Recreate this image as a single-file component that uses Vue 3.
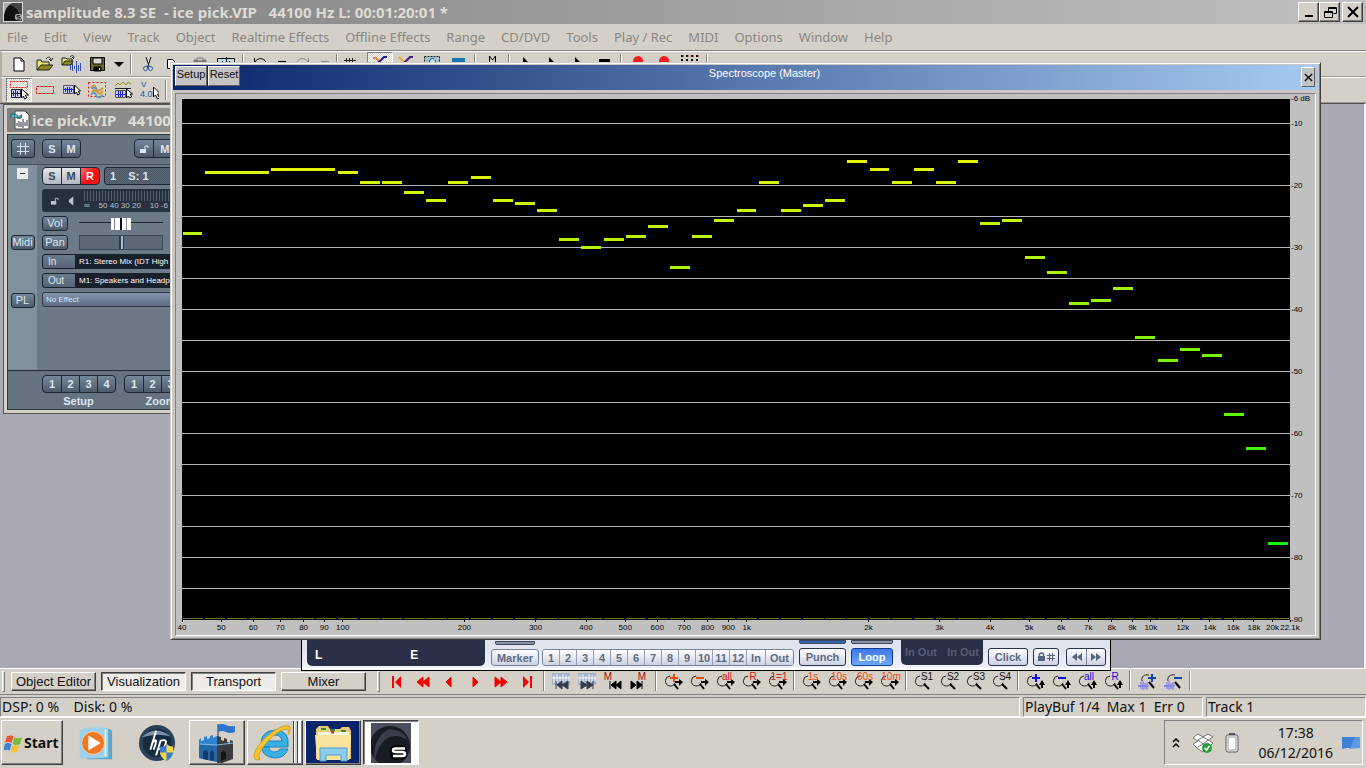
<script setup>
  import { ref } from 'vue';

  const menus = ['File', 'Edit', 'View', 'Track', 'Object', 'Realtime Effects', 'Offline Effects', 'Range', 'CD/DVD', 'Tools', 'Play / Rec', 'MIDI', 'Options', 'Window', 'Help'];

  // every icon is a list of [path, fill, stroke]
  const icons = {
    file: [['M5 4h7l3 3v10h-10z', '#fff', '#000'], ['M12 4v3h3', 'none', '#000']],
    open: [['M2 16V6h4l1 2h7v3', '#e8e47a', '#222'], ['M2 16l4-5h12l-4 5z', '#8c8a1c', '#222'], ['M11 5c2-3 5-2 5 1m-2-1l2 2l2-3', 'none', '#222']],
    importwav: [['M1 11V4h4l1 1h5v2', '#e8e47a', '#222'], ['M1 11l3-4h8l-2 4z', '#8c8a1c', '#222'], ['M9 3c2-2 4-2 4 1m-2-1l2 2', 'none', '#222'], ['M9.500 11v5M11.500 9v8M13.500 12v3M15.500 7v12M17.500 11v6M19.500 9v8', 'none', '#2c50b0']],
    save: [['M3.500 3.500h14v13h-14z', '#6b6b1e', '#000'], ['M6 4h9v6h-9z', '#d8d8d0', '#000'], ['M7 13h7v4h-7z', '#000', '#000'], ['M12 14h1v2h-1z', '#fff', 'none']],
    down: [['M5 8h10l-5 5z', '#000', 'none']],
    cut: [['M8 3l3 9M13 3l-3 9', 'none', '#111'], ['M6 13a2 2 0 1 0 3 3l1-4zM14 13a2 2 0 1 1-3 3l-1-4z', 'none', '#26549c']],
    copy: [['M3.500 5.500h5l3 3v6h-8z', '#fff', '#000'], ['M9.500 8.500h5l3 3v6h-8z', '#fff', '#22226c']],
    paste: [['M4 6h12v11h-12z', '#777', '#777'], ['M7 4h6v3h-6z', '#d4d0c8', '#777']],
    objedit: [['M1.500 4.500h17v11h-17z', '#b8dce8', '#000'], ['M10.500 3v14M4.500 8v4M6.500 7v6M8.500 8v4M13.500 7v6M15.500 8v4', 'none', '#111']],
    undo: [['M4.500 4v5h5M5 8c3-5 9-4 11 0', 'none', '#000']],
    redo: [['M15.500 4v5h-5M15 8c-3-5-9-4-11 0', 'none', '#888']],
    dash: [['M6 7h8v2h-8z', '#000', 'none']],
    dashoff: [['M6 7h8v2h-8z', '#888', 'none']],
    grid: [['M2.500 4v10M5.500 4v10M8.500 4v10M0 6.500h12M0 10.500h12', 'none', '#222']],
    fade: [['M3 4h3l4 4l4 5', 'none', '#e4842c', 2], ['M17 3h-3l-4 4l-5 5', 'none', '#1c1c8c', 2]],
    fade2: [['M3 3l4 4l3 1', 'none', '#e4b02c', 2], ['M17 3h-3l-4 4l-5 5', 'none', '#4c1c8c', 2]],
    range: [['M2.500 2.500h15v10h-15z', '#a0c4cc', '#222', 1, '2 1'], ['M12 5a3 3 0 1 0 1 1', '#cfe3ea', '#123c80']],
    bluebar: [['M4 4h13v4h-13z', '#1478ac', 'none']],
    mark: [['M7.500 8V2l3 4l3-4v6', 'none', '#000']],
    play: [['M7 3l8 8h-8z', '#000', 'none']],
    stop: [['M5 5h11v8h-11z', '#000', 'none']],
    rec: [['M10 2a5 5 0 1 0 .1 0z', '#fa1c1c', 'none']],
    midi: [['M1 2h18M1 6h18M1 9h18', 'none', '#111', 2, '2 3'], ['M3 2h16', 'none', '#d01040', 1, '1 4']],
    rangeobj: [['M1.500 1.500h17v6h-17z', 'none', '#e01818', 1, '2 1'], ['M2.500 9.500h9v8h-9zM2 13.500h9', '#c8d0f8', '#222'], ['M4.500 11v5M6.500 10v7M8.500 11v5', 'none', '#2424c8'], ['M12.500 9v9l2-2l1 3l2-1l-1-3h3z', '#fff', '#000']],
    redbox: [['M1.500 6.500h17v7h-17z', 'none', '#e01818', 1, '3 1']],
    objmouse: [['M2.500 5.500h10v8h-10z', '#c8d0f8', '#556'], ['M4.500 8v4M6.500 7v6M8.500 7v6M10.500 8v4M3 9.500h9', 'none', '#2424c8'], ['M13.500 5v9l2-2l1 3l2-1l-1-3h2z', '#fff', '#000']],
    curves: [['M1.500 2.500h17v14h-17z', '#d8d8c8', '#e01818', 1, '2 2'], ['M4 8q3-5 5 0t7 0M5 12q2-4 5 0t6-1', 'none', '#d8943c', 2], ['M4 15q3-5 5 0t7 0M5 9q2-3 5 0', 'none', '#5c9cc4', 2]],
    curveobj: [['M2 6l3-3l2 2l3-3l3 3l2-3l3 2', 'none', '#94901c'], ['M2 8.500h16', 'none', '#222'], ['M2.500 10.500h10v7h-10z', '#c8d0f8', '#556'], ['M5.500 11v6M7.500 11v6M9.500 11v6M3 14.500h9', 'none', '#2424c8'], ['M13.500 9v9l2-2l1 2l2-1l-1-3h2z', '#fff', '#000']],
    v40: [['M14.500 7v10l2-2l2 4l2-1l-2-4h3z', '#fff', '#000']],
    first: [['M5 4h2v12h-2zM14 4v12l-6-6z', '#f80000', 'none']],
    rew: [['M10 5v10l-6-5zM16 5v10l-6-5z', '#f80000', '#f80000']],
    left: [['M12 5v10l-5-5z', '#f80000', '#f80000']],
    right: [['M8 5v10l5-5z', '#f80000', '#f80000']],
    fwd: [['M4 5v10l6-5zM10 5v10l6-5z', '#f80000', '#f80000']],
    last: [['M13 4h2v12h-2zM6 4v12l6-6z', '#f80000', 'none']],
    wavprev: [['M1 1h18v12h-18z', '#a3b3cb', 'none'], ['M3 3v8M6 2v9M9 4v5M12 2v9M15 3v7M18 4v5M1 6h18', 'none', '#f2f6fa'], ['M5 9v8M11 9v8l-5-4zM17 9v8l-6-4z', '#333c4c', '#333c4c']],
    wavnext: [['M1 1h18v12h-18z', '#a3b3cb', 'none'], ['M3 3v8M6 2v9M9 4v5M12 2v9M15 3v7M18 4v5M1 6h18', 'none', '#f2f6fa'], ['M16 9v8M4 9v8l6-4zM10 9v8l6-4z', '#333c4c', '#333c4c']],
    mprev: [['M7 9v8M13 9v8l-5-4zM18 9v8l-5-4z', '#000', '#000']],
    mnext: [['M13 9v8M2 9v8l5-4zM8 9v8l5-4z', '#000', '#000']],
    zoomh: [['M7 4a5 5 0 1 0 5 7', 'none', '#222'], ['M7 4a5 5 0 0 1 5 7', 'none', '#bbb'], ['M11 12l4 5', 'none', '#000', 2], ['M12 9h4v-2l4 3l-4 4v-3h-4z', '#000', 'none']],
    zooms: [['M7 4a5 5 0 1 0 5 7', 'none', '#222'], ['M7 4a5 5 0 0 1 5 7', 'none', '#bbb'], ['M11 12l5 5', 'none', '#000', 2]],
    zoomv: [['M7 4a5 5 0 1 0 5 7', 'none', '#222'], ['M7 4a5 5 0 0 1 5 7', 'none', '#bbb'], ['M11 12l4 5', 'none', '#000', 2], ['M17 8l3 5h-2v3h-2v-3h-2z', '#000', 'none']],
    zoomw: [['M12 3c-5-1-8 2-7 6', 'none', '#222'], ['M12 10l5 6', 'none', '#000', 2], ['M2 13v2M4 10v7M6 9v9M8 11v6M10 10v8M1 14h11', 'none', '#6c6cf0']]
  };

  const mainBar = ['file', 'open', 'importwav', 'save', 'down', '|', 'cut', 'copy', 'paste', 'objedit', '|', 'undo', 'dash', 'redo', 'dashoff', '|', 'grid', 'fade', 'fade2', 'range', 'bluebar', '|', 'mark', '|', 'play', 'play', 'play', 'stop', '|', 'rec', 'rec', 'midi', '|'];
  const narrow = ['down', 'dash', 'dashoff'];
  const modeBar = ['rangeobj', 'redbox', 'objmouse', 'curves', 'curveobj', 'v40', '|'];

  const orange = '#e84c10', crimson = '#d81414', black = '#111', blue = '#1010d8';
  const navBar = [
    { icon: 'first' }, { icon: 'rew' }, { icon: 'left' }, { icon: 'right' }, { icon: 'fwd' }, { icon: 'last' }, { icon: '|' },
    { icon: 'wavprev' }, { icon: 'wavnext' }, { icon: 'mprev', text: 'M', color: '#a00808', x: 5 }, { icon: 'mnext', text: 'M', color: '#a00808', x: 13 }, { icon: '|' },
    { icon: 'zoomh', plus: true, color: orange }, { icon: 'zoomh', minus: true, color: orange },
    { icon: 'zoomh', text: 'all', color: crimson }, { icon: 'zoomh', text: 'R', color: crimson }, { icon: 'zoomh', text: '1=1', color: crimson }, { icon: '|' },
    { icon: 'zoomh', text: '1s', color: orange }, { icon: 'zoomh', text: '10s', color: orange }, { icon: 'zoomh', text: '60s', color: orange }, { icon: 'zoomh', text: '10m', color: orange }, { icon: '|' },
    { icon: 'zooms', text: 'S1', color: black, x: 14 }, { icon: 'zooms', text: 'S2', color: black, x: 14 }, { icon: 'zooms', text: 'S3', color: black, x: 14 }, { icon: 'zooms', text: 'S4', color: black, x: 14 }, { icon: '|' },
    { icon: 'zoomv', plus: true, color: blue }, { icon: 'zoomv', minus: true, color: blue }, { icon: 'zoomv', text: 'all', color: blue }, { icon: 'zoomv', text: 'R', color: blue }, { icon: '|' },
    { icon: 'zoomw', plus: true, color: '#1444a8', x: 15 }, { icon: 'zoomw', minus: true, color: '#1444a8', x: 15 }, { icon: '|' }
  ];

  const panels = ref([
    { name: 'Object Editor', on: false },
    { name: 'Visualization', on: true },
    { name: 'Transport', on: true },
    { name: 'Mixer', on: false }
  ]);

  // third octave levels in dB, 50 bands
  const levels = [-27.7, -18, -18, -18, -17.4, -17.4, -17.4, -18, -19.6, -19.6, -21.1, -22.4, -19.5, -18.7, -22.5, -23, -24.1, -28.8, -30.1, -28.7, -28.2, -26.7, -33.2, -28.2, -25.6, -24.1, -19.5, -24, -23.3, -22.4, -16.1, -17.4, -19.5, -17.5, -19.5, -16.1, -26.2, -25.6, -31.7, -34.1, -39.1, -38.5, -36.6, -44.5, -48.2, -46.4, -47.4, -56.9, -62.4, -77.7];
  const dbLines = [-10, -15, -20, -25, -30, -35, -40, -45, -50, -55, -60, -65, -70, -75, -80, -85];
  const dbLabels = [-10, -20, -30, -40, -50, -60, -70, -80, -90];
  const freqs = [40, 50, 60, 70, 80, 90, 100, 200, 300, 400, 500, 600, 700, 800, 900, 1000, 2000, 3000, 4000, 5000, 6000, 7000, 8000, 9000, 10000, 12000, 14000, 16000, 18000, 20000, 22100];

  const dbY = (db) => (-6 - db) / 84 * 100 + '%';
  const freqX = (f) => Math.log10(f / 40) / Math.log10(22100 / 40) * 100 + '%';
  const freqName = (f) => f >= 1000 ? f / 1000 + 'k' : f;
  const bandX = (i) => i * 2 + 0.05 + '%';
  // bands with the same level run together
  const bandW = (i) => levels[i] === levels[i + 1] && levels[i] > -19 ? '2%' : '1.8%';
  const bandColor = (db) => `hsl(${64 + (-db - 16) * 0.85}, 95%, 49%)`;
</script>

<template>
  <div class="screen">
    <header class="titlebar">
      <svg class="app-icon" viewBox="0 0 20 20"><rect width="20" height="20" fill="#ddd" /><rect x="1" y="1" width="18" height="18" fill="#444" /><path d="M1 19V5q8-5 14 4q3 5 0 10z" fill="#111" /><path d="M1 1h8q-6 3-8 12z" fill="#aaa" /><rect x="12" y="12" width="7" height="6" rx="2" fill="#aaa" /><path d="M17 13.500h-3v1.500h3v2h-3" fill="none" stroke="#222" /></svg>
      <h1>samplitude 8.3 SE&nbsp; - ice pick.VIP&nbsp;&nbsp; 44100 Hz L: 00:01:20:01 *</h1>
      <div class="winbtns">
        <button aria-label="Minimize"><svg viewBox="0 0 16 16"><path d="M4 12h8" stroke="#000" stroke-width="2" /></svg></button>
        <button aria-label="Restore"><svg viewBox="0 0 16 16"><path d="M6.500 7V3.500h8v6h-3M6 4.500h8M2.500 7.500h8v6h-8zM3 8.500h8" fill="none" stroke="#000" /></svg></button>
        <button aria-label="Close" class="apart"><svg viewBox="0 0 16 16"><path d="M3 3l10 10M13 3l-10 10" stroke="#000" stroke-width="2" /></svg></button>
      </div>
    </header>

    <nav class="menubar">
      <button v-for="m in menus" :key="m">{{ m }}</button>
    </nav>

    <div class="toolbar">
      <template v-for="(t, i) in mainBar" :key="i">
        <span v-if="t === '|'" class="sep"></span>
        <button v-else class="tool" :class="{ narrow: narrow.includes(t), pressed: t === 'fade' }" :aria-label="t">
          <svg viewBox="0 0 20 20"><path v-for="(p, j) in icons[t]" :key="j" :d="p[0]" :fill="p[1]" :stroke="p[2]" :stroke-width="p[3]" :stroke-dasharray="p[4]" /></svg>
        </button>
      </template>
    </div>
    <div class="toolbar">
      <template v-for="(t, i) in modeBar" :key="i">
        <span v-if="t === '|'" class="sep"></span>
        <button v-else class="tool" :class="{ pressed: t === 'rangeobj' }" :aria-label="t">
          <svg viewBox="0 0 20 20">
            <template v-if="t === 'v40'"><text x="2" y="7" font-size="8" fill="#2050c0">V</text><text x="1" y="17" font-size="9" fill="#2060b0">4.0</text></template>
            <path v-for="(p, j) in icons[t]" :key="j" :d="p[0]" :fill="p[1]" :stroke="p[2]" :stroke-width="p[3]" :stroke-dasharray="p[4]" />
          </svg>
        </button>
      </template>
    </div>

    <main class="workspace">
      <section class="project">
        <div class="project-title">
          <svg viewBox="0 0 20 20"><path d="M5 1h10l4 4v14h-14z" fill="#fff" stroke="#444" /><path d="M0 4q3-3 6 0t6 0v4q-3 2-6 0t-6 0z" fill="#2c7c88" /><path d="M2 6h9" stroke="#bfe4e8" stroke-dasharray="2 1" /><path d="M7 13v3M9 11v6M11 12v5M13 9v9M15 12v4M17 10v6" stroke="#26323c" /></svg>
          <h2>ice pick.VIP&nbsp;&nbsp; 44100 Hz</h2>
        </div>
        <div class="project-body">
          <div class="track-head">
            <button class="dark hash" aria-label="Grid"><svg viewBox="0 0 14 12"><path d="M4.500 0v12M9.500 0v12M1 3.500h12M1 8.500h12" stroke="#dce6f2" /></svg></button>
            <div class="group"><button class="dark">S</button><button class="dark">M</button></div>
            <div class="group master"><button class="dark" aria-label="Lock"><svg viewBox="0 0 10 10"><path d="M1 5h6v4h-6z" fill="#dce6f2" /><path d="M6 5V2h3v2" fill="none" stroke="#dce6f2" /></svg></button><button class="dark">Master</button></div>
          </div>
          <div class="track">
            <div class="track-side">
              <button class="fold" aria-label="Fold"></button>
              <button class="dark midi">Midi</button>
              <button class="dark pl">PL</button>
            </div>
            <div class="track-main">
              <div class="row">
                <div class="group smr"><button class="light">S</button><button class="light">M</button><button class="red">R</button></div>
                <div class="name">1 &nbsp;&nbsp; S: 1</div>
              </div>
              <div class="meter">
                <svg viewBox="0 0 10 10"><path d="M1 5h6v4h-6z" fill="#b9c3d0" /><path d="M6 5V2h3v2" fill="none" stroke="#b9c3d0" /></svg>
                <svg viewBox="0 0 10 10"><path d="M7 0v10l-5-4v-2z" fill="#b9c3d0" /></svg>
                <div class="scale"><i></i><span>∞ &nbsp;&nbsp; 50 40 30 20 &nbsp;&nbsp; 10 -6</span></div>
              </div>
              <div class="row">
                <label class="dark tag" for="vol">Vol</label>
                <input id="vol" type="range" class="vol" value="50">
              </div>
              <div class="row">
                <label class="dark tag" for="pan">Pan</label>
                <input id="pan" type="range" class="pan" value="50">
              </div>
              <div class="slot"><span>In</span><b>R1: Stereo Mix (IDT High D</b></div>
              <div class="slot"><span>Out</span><b>M1: Speakers and Headpho</b></div>
              <button class="effect">No Effect</button>
            </div>
          </div>
          <div class="track-foot">
            <div class="presets"><div class="group"><button v-for="n in 4" :key="n" class="dark">{{ n }}</button></div><span>Setup</span></div>
            <div class="presets"><div class="group"><button v-for="n in 4" :key="n" class="dark">{{ n }}</button></div><span>Zoom</span></div>
          </div>
        </div>
      </section>
    </main>

    <section class="transport">
      <div class="time"><span>L</span><span>E</span></div>
      <div class="markers">
        <i class="bar"></i>
        <div class="marker-row">
          <button class="pale">Marker</button>
          <div class="nums"><button v-for="n in 12" :key="n">{{ n }}</button><button class="io">In</button><button class="io">Out</button></div>
        </div>
      </div>
      <div class="stack"><i class="bar blue"></i><button class="pale strong">Punch</button></div>
      <div class="stack loop"><i class="bar thin"></i><button class="pale on">Loop</button></div>
      <div class="inout"><span>In Out</span><span>In Out</span></div>
      <div class="stack click"><button class="pale strong">Click</button></div>
      <button class="pale strong lock" aria-label="Lock to grid"><svg viewBox="0 0 18 10"><path d="M1 4h7v5h-7z" fill="#55647c" /><path d="M2.500 4V2q2-2 4 0v2" fill="none" stroke="#55647c" stroke-width="1.500" /><path d="M12.500 1v8M15.500 1v8M10 3.500h8M10 6.500h8" stroke="#55647c" /></svg></button>
      <div class="skip"><button aria-label="Back"><svg viewBox="0 0 10 8"><path d="M5 0v8l-5-4zM10 0v8l-5-4z" fill="#55647c" /></svg></button><button aria-label="Forward"><svg viewBox="0 0 10 8"><path d="M0 0v8l5-4zM5 0v8l5-4z" fill="#55647c" /></svg></button></div>
    </section>

    <section class="scope">
      <div class="scope-title">
        <button>Setup</button>
        <button>Reset</button>
        <h2>Spectroscope (Master)</h2>
        <button class="close" aria-label="Close"><svg viewBox="0 0 10 10"><path d="M1 1l8 8M9 1l-8 8" stroke="#000" stroke-width="1.500" /></svg></button>
      </div>
      <div class="chart">
        <svg class="plot">
          <line v-for="d in dbLines" :key="d" x1="0" x2="100%" :y1="dbY(d)" :y2="dbY(d)" stroke="#b4b4b4" shape-rendering="crispEdges" />
          <rect v-for="(l, i) in levels" :key="i" :x="bandX(i)" :y="dbY(l)" :width="bandW(i)" height="3" :fill="bandColor(l)" transform="translate(0 -2)" shape-rendering="crispEdges" />
          <line v-for="(l, i) in levels" :key="'z' + i" :x1="bandX(i)" :x2="i * 2 + 1.9 + '%'" y1="99.8%" y2="99.8%" stroke="#70702c" shape-rendering="crispEdges" />
        </svg>
        <svg class="db">
          <text x="1" y="2">-6 dB</text>
          <text v-for="d in dbLabels" :key="d" x="1" :y="dbY(d)" dy="2">{{ d }}</text>
        </svg>
        <svg class="freq">
          <template v-for="f in freqs" :key="f">
            <line :x1="freqX(f)" :x2="freqX(f)" y1="0" y2="2" stroke="#000" shape-rendering="crispEdges" />
            <text :x="freqX(f)" y="10" text-anchor="middle">{{ freqName(f) }}</text>
          </template>
        </svg>
      </div>
    </section>

    <div class="navbar">
      <i class="grip"></i>
      <div class="panels">
        <button v-for="p in panels" :key="p.name" :class="{ on: p.on }" @click="p.on = !p.on">{{ p.name }}</button>
      </div>
      <i class="grip"></i>
      <template v-for="(t, i) in navBar" :key="i">
        <span v-if="t.icon === '|'" class="sep"></span>
        <button v-else class="tool" :aria-label="t.icon">
          <svg viewBox="0 0 20 20">
            <path v-for="(p, j) in icons[t.icon]" :key="j" :d="p[0]" :fill="p[1]" :stroke="p[2]" :stroke-width="p[3]" />
            <rect v-if="t.plus || t.minus" :x="(t.x || 11) - 4" y="5" width="8" height="2" :fill="t.color" />
            <rect v-if="t.plus" :x="(t.x || 11) - 1" y="2" width="2" height="8" :fill="t.color" />
            <text v-if="t.text" :x="t.x || 12" y="8" text-anchor="middle" font-size="10" :fill="t.color">{{ t.text }}</text>
          </svg>
        </button>
      </template>
    </div>

    <div class="status">
      <span class="load">DSP: 0 %&nbsp;&nbsp;&nbsp; Disk: 0 %</span>
      <span class="buf">PlayBuf 1/4&nbsp; Max 1&nbsp; Err 0</span>
      <span class="trk">Track 1</span>
    </div>

    <footer class="taskbar">
      <button class="start">
        <svg viewBox="0 0 20 20"><path d="M3 3q4-2 7 0l-2 7q-3-2-7 0z" fill="#e4582c" /><path d="M11 4q3 2 8 0l-2 7q-4 2-8 0z" fill="#7cb83c" /><path d="M1 11q3-2 7 0l-2 7q-3-2-7 0z" fill="#3c84d4" /><path d="M9 12q3 2 7 0l-2 7q-4 2-7 0z" fill="#f4c430" /></svg>
        Start
      </button>
      <button class="task plain" aria-label="Media Player">
        <svg viewBox="0 0 40 40"><path d="M9 5h26l3 2v30h-26l-3-3z" fill="#5ca4cc" /><path d="M4 6q14-4 30-1v30q-16 2-30 1z" fill="#9cd0ec" /><path d="M31 6v28" stroke="#d8f0fa" stroke-width="2" /><circle cx="18" cy="20" r="12" fill="#f07820" stroke="#fbd4a8" /><path d="M13 12l13 8l-13 8z" fill="#fff" /></svg>
      </button>
      <button class="task plain" aria-label="HP">
        <svg viewBox="0 0 40 40"><circle cx="20" cy="20" r="19" fill="#2c4258" /><circle cx="20" cy="20" r="15" fill="#182c40" /><path d="M4 14q14-14 30-1q-14-4-30 1z" fill="#7c94a8" /><path d="M19 7l-6 20M14.500 21q6-8 4 0l-2 6M24 17l-5 16M23 18q8-3 6 3q-2 7-8 5" fill="none" stroke="#fff" stroke-width="2" /><path d="M23 24q5 0 7-3q3 3 7 3v6q-1 6-7 9q-6-3-7-9z" fill="#3c7ccc" /><path d="M30 21q3 3 7 3v6h-7zM23 30h7v9q-6-3-7-9z" fill="#f4d44c" /></svg>
      </button>
      <button class="task" aria-label="Castle">
        <svg viewBox="0 0 40 40"><path d="M21 1v16" stroke="#666" stroke-width="1.500" /><path d="M21 2q4-2 8 0t9 1v6q-5 2-9 0t-8 0z" fill="#2c74d0" /><path d="M2 17l2-2v3l3-1v-3l3-1v3l3-1v-2l3-1v3l4-2v26l-18-4z" fill="#2c84d0" /><path d="M20 13l4 1v3l3 1v-3l3 1v3l3 1v-3l3 1v18l-16 6z" fill="#3c3c40" /><path d="M2 22l18 1v16l-18-4z" fill="#2468a8" /><path d="M6 36v-7q2-4 5 0v8zM13 37v-8q2-3 4 0v9z" fill="#123c70" /><path d="M24 38v-8q3-4 5 0v6z" fill="#141416" /><path d="M3 21l17 1l16-2" fill="none" stroke="#83b4e0" /></svg>
      </button>
      <button class="task grouped" aria-label="Internet Explorer">
        <svg viewBox="0 0 40 40"><path d="M11 24h25q2-17-13-17q-14 1-14 14t14 14q10 0 13-9h-8q-2 3-5 3q-6 0-6-5zM16 18q1-6 7-6t7 6z" fill="#38b0e4" fill-rule="evenodd" stroke="#1c84c0" /><path d="M3 36q-4-6 9-20q16-15 25-13q3 2-1 9q2-6-1-6q-8 0-20 13q-11 13-7 17q-3 2-5 0z" fill="#f4c434" stroke="#d8a018" /></svg>
      </button>
      <button class="task folder" aria-label="Explorer">
        <svg viewBox="0 0 40 40"><path d="M3 6l3-3h9l2 3h10l2-2h7l2 4v28h-35z" fill="#e8cc74" /><path d="M5 9h31v5h-31z" fill="#fff8dc" /><path d="M8 6h5M17 7h5M28 8h5" stroke="#2c8c5c" stroke-width="2" /><path d="M18 9h3" stroke="#d83030" stroke-width="3" /><path d="M2 12h36l-2 25h-32z" fill="#f8e49c" /><path d="M7 25h27v13h-6v-6h-15v6h-6z" fill="#8cccec" stroke="#4c9ccc" /></svg>
      </button>
      <button class="task active" aria-label="Samplitude">
        <svg viewBox="0 0 40 40"><rect width="40" height="40" fill="#4c505c" /><circle cx="19" cy="23" r="20" fill="#181b22" /><path d="M4 40q-4-24 14-34q13 0 19 11q-15-9-25 2q-8 9-8 21z" fill="#3a3e4a" /><rect x="19" y="22" width="17" height="15" rx="5" fill="#08080a" /><path d="M34 25.500h-9q-3 0-3 2q0 1.500 3 1.500h6q3 0 3 2t-3 2h-9" fill="none" stroke="#fff" stroke-width="2.500" /></svg>
      </button>
      <div class="tray">
        <button class="chev" aria-label="Show hidden icons"><svg viewBox="0 0 8 10"><path d="M1 4l3-3l3 3M1 9l3-3l3 3" fill="none" stroke="#000" stroke-width="1.500" /></svg></button>
        <svg class="box" viewBox="0 0 20 20"><path d="M5 1l5 3l5-3l5 3l-5 3l5 3l-4 4l-6 5l-6-4l-4-4l5-3l-5-3z" fill="#fff" stroke="#777" /><path d="M5 7l5-3l5 3l-5 4zM5 14l5-3l5 3" fill="none" stroke="#777" /><circle cx="14" cy="15" r="5" fill="#2c9c3c" /><path d="M11.500 15l2 2l3-4" fill="none" stroke="#fff" stroke-width="1.500" /></svg>
        <svg class="batt" viewBox="0 0 14 20"><rect x="1" y="2" width="12" height="17" rx="2" fill="#fff" stroke="#555" /><rect x="3" y="4" width="8" height="13" fill="#fff" stroke="#999" /><path d="M4 1h6" stroke="#555" stroke-width="2" /></svg>
        <div class="clock"><time>17:38</time><time>06/12/2016</time></div>
        <svg class="desk" viewBox="0 0 18 16"><path d="M0 2h18v11l-18 1z" fill="#3c80d8" /><path d="M8 13l5-11h5v11z" fill="#5c98e4" /><path d="M0 14l7-1v1z" fill="#eee" /></svg>
      </div>
    </footer>
  </div>
</template>

<style>
body {
  background: #d4d0c8;
}
</style>

<style scoped>
.screen {
  position: relative;
  display: flex;
  flex-direction: column;
  min-height: 100vh;
  overflow: hidden;
  background: #d4d0c8;
  color: #111;
  font-family: "Noto Sans", "DejaVu Sans", sans-serif;
  font-size: 13px;
}
.screen * {
  box-sizing: border-box;
}
button {
  padding: 0;
  margin: 0;
  border: 0;
  background: none;
  color: inherit;
  font: inherit;
}
h1, h2 {
  margin: 0;
  white-space: nowrap;
}
svg {
  display: block;
  flex: none;
}

.titlebar {
  display: flex;
  align-items: center;
  height: 24px;
  padding: 0 3px;
  background: linear-gradient(90deg, #808080, #c0c0c0);
}
.app-icon {
  width: 20px;
  height: 20px;
}
.titlebar h1 {
  flex: 1;
  padding-left: 3px;
  color: #dedbd4;
  font-size: 15px;
  line-height: 22px;
}
.winbtns {
  display: flex;
}
.winbtns button {
  width: 21px;
  height: 20px;
  background: #d4d0c8;
  border: 1px solid;
  border-color: #fff #404040 #404040 #fff;
  box-shadow: inset -1px -1px #808080;
}
.winbtns svg {
  width: 16px;
  height: 16px;
  margin: 0 auto;
}
.winbtns .apart {
  margin-left: 2px;
}

.menubar {
  display: flex;
  gap: 16px;
  height: 27px;
  padding: 0 7px;
  border-bottom: 1px solid #808080;
}
.menubar button {
  color: #8a8781;
}

.toolbar {
  display: flex;
  height: 26px;
  padding-left: 4px;
  border-top: 1px solid #fff;
  border-bottom: 1px solid #9c9890;
  border-left: 2px solid #b4b0a8;
}
.tool {
  display: flex;
  align-items: center;
  justify-content: center;
  width: 26px;
  flex: none;
}
.tool svg {
  width: 20px;
  height: 20px;
}
.tool text {
  font-family: "Liberation Sans", sans-serif;
}
.tool.narrow {
  width: 17px;
}
.tool.pressed {
  background: repeating-conic-gradient(#fff 0 25%, #d4d0c8 0 50%) 0 0 / 2px 2px;
  border: 1px solid;
  border-color: #808080 #fff #fff #808080;
}
.sep {
  flex: none;
  width: 8px;
  background: linear-gradient(#808080, #808080) 3px 2px / 1px 20px no-repeat, linear-gradient(#fff, #fff) 4px 2px / 1px 20px no-repeat;
}

.workspace {
  position: relative;
  flex: 1;
  background: #a8a9b5;
  border-top: 1px solid #505050;
  border-right: 2px solid #eee;
}

/* project window */
.project {
  position: absolute;
  left: 3px;
  top: 0;
  width: 400px;
  padding: 3px;
  background: #d4d0c8;
  border: 1px solid #555;
}
.project-title {
  display: flex;
  align-items: center;
  height: 24px;
  padding-left: 3px;
  background: linear-gradient(90deg, #808080, #a8a8a8);
}
.project-title svg {
  width: 20px;
  height: 20px;
}
.project-title h2 {
  padding-left: 2px;
  color: #dedbd4;
  font-size: 15px;
  line-height: 22px;
}
.project-body {
  margin-top: 2px;
  border: 1px solid #30383f;
  background: #65727f;
  color: #dce6f2;
  font-family: "Liberation Sans", sans-serif;
  font-size: 11px;
}
.track-head {
  display: flex;
  height: 29px;
  padding: 4px 3px;
}
.dark {
  background: linear-gradient(#76879b, #4d5b6c);
  border: 1px solid #1d2833;
  border-radius: 3px;
  color: #dce6f2;
}
.group {
  display: flex;
}
.group button {
  width: 19px;
  height: 18px;
  margin-right: -1px;
  border-radius: 0;
  font-size: 11px;
  font-weight: bold;
}
.group button:first-child {
  width: 20px;
  border-radius: 4px 0 0 4px;
}
.group button:last-child {
  border-radius: 0 4px 4px 0;
}
.hash {
  width: 24px;
  height: 19px;
  margin-right: 7px;
}
.hash svg {
  width: 14px;
  height: 12px;
  margin: 0 auto;
}
.track-head .group button {
  height: 19px;
  width: 20px;
}
.master {
  margin-left: 54px;
}
.track-head .master button:last-child {
  width: 50px;
}
.master svg {
  width: 10px;
  height: 10px;
  margin: 0 auto;
}
.track {
  display: flex;
  height: 207px;
  border-bottom: 1px solid #1d2833;
  border-top: 1px solid #45505a;
}
.track-side {
  display: flex;
  flex-direction: column;
  align-items: center;
  width: 29px;
  padding-top: 3px;
  background: #81909d;
}
.track-side .dark {
  width: 24px;
  height: 15px;
  line-height: 13px;
}
.fold {
  width: 11px;
  height: 11px;
  background: linear-gradient(#334, #334) center / 5px 1px no-repeat #e8edf2;
}
.midi {
  margin: 56px 0 43px;
}
.track-main {
  display: grid;
  flex: 1;
  grid-template-rows: 18px 23px 15px 15px 15px 15px 15px;
  align-content: start;
  gap: 4px;
  padding: 2px 0 0 5px;
  background: #6c7986;
}
.row {
  display: flex;
}
.light {
  background: linear-gradient(#e2e5ea, #b3b8c2);
  border: 1px solid #1d2833;
  color: #3c4656;
}
.red {
  background: linear-gradient(135deg, #ff6e64, #f01414 50%);
  border: 1px solid #1d2833;
  color: #fff;
}
.smr {
  margin-right: 5px;
}
.smr button {
  width: 20px;
}
.name {
  flex: 1;
  padding: 2px 5px;
  background: repeating-conic-gradient(#4c5866 0 25%, #5c6876 0 50%) 0 0 / 2px 2px;
  border: 1px solid #1d2833;
  border-radius: 3px;
  font-weight: bold;
}
.meter {
  display: flex;
  align-items: center;
  gap: 8px;
  padding-left: 8px;
  background: #27313d;
  border-radius: 3px;
}
.meter svg {
  width: 9px;
  height: 10px;
}
.scale {
  display: flex;
  flex: 1;
  flex-direction: column;
  color: #b9c3d0;
  font-size: 8px;
  line-height: 9px;
}
.scale i {
  height: 10px;
  background: repeating-linear-gradient(90deg, #55606e 0 1px, #27313d 1px 3px);
}
.tag {
  width: 26px;
  margin-right: 11px;
  line-height: 13px;
  text-align: center;
}
.vol, .pan {
  appearance: none;
  width: 84px;
  height: 15px;
  margin: 0;
  background: linear-gradient(#1d2833, #1d2833) 0 6px / 100% 1px no-repeat;
}
.vol::-webkit-slider-thumb {
  appearance: none;
  width: 20px;
  height: 12px;
  background: linear-gradient(90deg, #fff 0 3px, #889 3px 4px, #fff 4px 9px, #111 9px 11px, #fff 11px 15px, #889 15px 16px, #fff 16px);
}
.pan {
  background: #5c6a78;
  border: 1px solid #3c4855;
}
.pan::-webkit-slider-thumb {
  appearance: none;
  width: 5px;
  height: 13px;
  background: linear-gradient(90deg, #2c3844 0 2px, #a8bcdc 2px 4px, #2c3844 4px);
}
.slot {
  display: flex;
  background: #18202c;
  border: 1px solid #18202c;
  border-radius: 3px;
  overflow: hidden;
  line-height: 13px;
  white-space: nowrap;
}
.slot span {
  flex: none;
  width: 32px;
  padding-left: 5px;
  background: linear-gradient(#6a7b8e, #556476);
  font-size: 10px;
}
.slot b {
  padding-left: 4px;
  color: #fff;
  font-size: 8px;
  font-weight: normal;
}
.effect {
  padding-left: 3px;
  background: linear-gradient(#8494ac, #5c6b80);
  border: 1px solid #2d3844;
  border-radius: 3px;
  color: #dce6f2;
  font-size: 8px;
  text-align: left;
}
.track-foot {
  display: flex;
  gap: 9px;
  height: 38px;
  padding: 4px 0 0 34px;
}
.presets {
  display: flex;
  flex-direction: column;
  align-items: center;
  font-weight: bold;
}
.presets span {
  padding-top: 2px;
}

/* transport panel, partly hidden by the scope */
.transport {
  position: absolute;
  left: 301px;
  bottom: 97px;
  display: flex;
  align-items: flex-end;
  width: 810px;
  height: 60px;
  padding: 0 4px 4px 5px;
  background: linear-gradient(#dfe3ee 60%, #f2f3fa);
  border: 1px solid #000;
  box-shadow: inset 0 -2px #fff;
  color: #5d6b80;
  font-family: "Liberation Sans", sans-serif;
  font-size: 11px;
  font-weight: bold;
}
.time {
  display: flex;
  flex: none;
  align-items: flex-end;
  gap: 88px;
  width: 178px;
  height: 50px;
  padding: 0 0 4px 8px;
  background: #292f47;
  border-radius: 0 0 5px 5px;
  color: #fff;
  font-size: 12px;
}
.markers {
  flex: none;
  margin-left: 6px;
}
.bar {
  display: block;
  height: 4px;
  background: #8b92a0;
  border: 1px solid #3c4860;
  border-radius: 0 0 2px 2px;
}
.markers .bar {
  width: 40px;
  margin: 0 0 4px 4px;
}
.marker-row {
  display: flex;
  gap: 3px;
}
.pale {
  height: 17px;
  background: linear-gradient(#fff, #ccd2e2);
  border: 1px solid #77839a;
  border-radius: 3px;
}
.marker-row .pale {
  width: 48px;
}
.nums {
  display: flex;
  overflow: hidden;
  border: 1px solid #77839a;
  border-radius: 3px;
}
.nums button {
  width: 17px;
  height: 15px;
  border-right: 1px solid #98a2b6;
  background: linear-gradient(#fff, #ccd2e2);
}
.nums .io {
  width: 19px;
}
.nums .io:last-child {
  width: 27px;
  border: 0;
}
.stack {
  flex: none;
  width: 47px;
  margin-left: 5px;
}
.stack .pale {
  display: block;
  width: 100%;
  height: 18px;
}
.strong {
  border-color: #26324a;
}
.stack .bar {
  margin-bottom: 4px;
}
.stack .blue {
  background: #3064b0;
}
.stack.loop {
  width: 42px;
}
.stack .on {
  background: linear-gradient(#3c78e4, #6ca8fc);
  border-color: #123c94;
  color: #fff;
}
.inout {
  display: flex;
  flex: none;
  align-items: center;
  justify-content: space-between;
  width: 82px;
  height: 30px;
  margin: 0 0 1px 8px;
  padding: 4px 4px 0 4px;
  background: #292f47;
  border-radius: 0 0 5px 5px;
  color: #565d74;
}
.stack.click {
  width: 40px;
}
.lock {
  flex: none;
  width: 26px;
  height: 18px;
  margin-left: 5px;
}
.lock svg {
  width: 18px;
  height: 10px;
  margin: 0 auto;
}
.skip {
  display: flex;
  flex: none;
  margin-left: 7px;
  background: linear-gradient(#fff, #ccd2e2);
  border: 1px solid #26324a;
  border-radius: 3px;
}
.skip button {
  width: 19px;
  height: 16px;
}
.skip button + button {
  border-left: 1px solid #77839a;
}
.skip svg {
  width: 10px;
  height: 8px;
  margin: 0 auto;
}

/* spectroscope */
.scope {
  position: absolute;
  left: 170px;
  right: 45px;
  top: 62px;
  bottom: 128px;
  display: flex;
  flex-direction: column;
  padding: 2px;
  background: #c8c7c4;
  border: 1px solid;
  border-color: #d4d0c8 #404040 #404040 #d4d0c8;
  box-shadow: inset 1px 1px #fff, inset -1px -1px #808080;
  font-family: "Liberation Sans", sans-serif;
}
.scope-title {
  display: flex;
  align-items: flex-start;
  gap: 1px;
  height: 25px;
  padding: 1px 3px 0 2px;
  background: linear-gradient(90deg, #0a246a, #a6caf0);
}
.scope-title button {
  width: 32px;
  height: 20px;
  padding-bottom: 4px;
  background: #c4c4c4;
  border: 1px solid;
  border-color: #fff #606060 #606060 #fff;
  font-size: 11px;
  line-height: 14px;
}
.scope-title h2 {
  flex: 1;
  padding: 1px 12px 0 0;
  color: #fff;
  font-size: 11px;
  font-weight: normal;
  text-align: center;
}
.scope-title .close {
  width: 14px;
  margin-top: 1px;
  padding: 0;
}
.close svg {
  width: 9px;
  height: 9px;
  margin: 0 auto;
}
.chart {
  display: grid;
  flex: 1;
  grid-template-columns: 1fr 25px;
  grid-template-rows: 1fr 15px;
  margin: 3px 2px 1px;
  padding: 5px 0 0 6px;
  background: #c0c0c0;
  border: 1px solid;
  border-color: #808080 #fff #fff #808080;
}
.chart svg {
  width: 100%;
  height: 100%;
  overflow: visible;
}
.plot {
  background: #000;
}
.chart text {
  font-size: 8px;
}

/* bottom toolbar */
.navbar {
  display: flex;
  height: 27px;
  padding-left: 2px;
  border-top: 1px solid #fff;
  border-bottom: 1px solid #808080;
}
.navbar .tool svg {
  width: 20px;
  height: 20px;
  overflow: visible;
}
.grip {
  flex: none;
  width: 3px;
  margin: 2px 4px 2px 0;
  border: 1px solid;
  border-color: #fff #808080 #808080 #fff;
}
.panels {
  display: flex;
  gap: 5px;
  padding: 3px 11px 4px 2px;
  font-family: "Liberation Sans", sans-serif;
}
.panels button {
  width: 85px;
  height: 19px;
  border: 1px solid;
  border-color: #fff #404040 #404040 #fff;
  box-shadow: inset -1px -1px #808080;
  font-size: 13px;
  white-space: nowrap;
}
.panels button.on {
  background: #eeece8;
  border-color: #404040 #fff #fff #404040;
  box-shadow: inset 1px 1px #808080;
}

.status {
  display: flex;
  gap: 3px;
  height: 22px;
  padding-top: 2px;
  font-size: 14px;
}
.status span {
  padding: 0 1px;
  border: 1px solid;
  border-color: #808080 #fff #fff #808080;
  line-height: 18px;
  white-space: nowrap;
}
.load {
  flex: 1;
}
.buf {
  width: 180px;
}
.trk {
  width: 160px;
}

.taskbar {
  display: flex;
  gap: 2px;
  height: 51px;
  padding: 2px 3px 3px 1px;
  border-top: 1px solid #fff;
}
.start {
  display: flex;
  align-items: center;
  gap: 1px;
  width: 62px;
  padding-left: 2px;
  font-weight: bold;
  font-size: 14px;
}
.start, .task {
  border: 1px solid;
  border-color: #fff #404040 #404040 #fff;
  box-shadow: inset -1px -1px #808080;
}
.start svg {
  width: 19px;
  height: 20px;
}
.task {
  width: 56px;
}
.task svg {
  width: 40px;
  height: 40px;
  margin: 0 auto;
}
.task.plain {
  width: 60px;
  border: 0;
  box-shadow: none;
}
.task.plain svg {
  width: 38px;
  height: 38px;
}
.task.grouped {
  padding-right: 7px;
  background: linear-gradient(90deg, #404040 0 1px, #fff 1px 2px, #d4d0c8 2px 4px, #404040 4px 5px, #fff 5px 6px) right 1px top / 8px 100% no-repeat;
}
.task.folder {
  background: #0a246a;
}
.task.active {
  background: #fff;
  border-color: #404040 #fff #fff #404040;
  box-shadow: inset 1px 1px #808080;
}
.tray {
  display: flex;
  align-items: center;
  margin-left: auto;
  padding: 0 2px 0 7px;
  border: 1px solid;
  border-color: #808080 #fff #fff #808080;
}
.chev svg {
  width: 8px;
  height: 10px;
}
.box {
  width: 20px;
  height: 20px;
  margin: 0 12px 0 13px;
}
.batt {
  width: 14px;
  height: 20px;
  margin-right: 20px;
}
.clock {
  display: flex;
  flex-direction: column;
  align-items: center;
  font-size: 14px;
  line-height: 20px;
}
.desk {
  width: 18px;
  height: 16px;
  margin-left: 9px;
}
</style>
